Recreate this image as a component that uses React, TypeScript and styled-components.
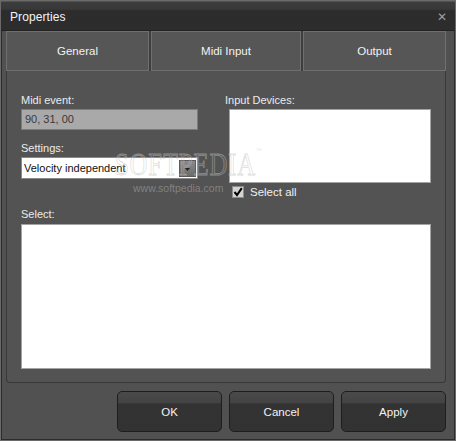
import React from "react";
import styled, { createGlobalStyle } from "styled-components";

const Global = createGlobalStyle`
  html, body { margin: 0; padding: 0; background: #515151; }
  * { box-sizing: border-box; }
`;

const Window = styled.div`
  position: relative;
  width: 456px;
  height: 441px;
  background: #515151;
  border: 1px solid #6a6a6a;
  box-shadow: inset 0 0 0 1px #2c2c2c;
  display: flex;
  flex-direction: column;
  font-family: "Liberation Sans", Arial, sans-serif;
  font-size: 11px;
  color: #ececec;
  overflow: hidden;
`;

const TitleBar = styled.div`
  height: 30px;
  flex: none;
  display: flex;
  align-items: center;
  justify-content: space-between;
  padding: 2px 7px 0 9px;
  border-top: 1px solid #50535b;
  background: linear-gradient(#3c3c3c 0, #383838 25%, #2c2c2c 32%, #2d2d2d 100%);
  border-bottom: 1px solid #222;
`;

const Title = styled.span`
  font-size: 12px;
  color: #f4f4f4;
  letter-spacing: 0.1px;
`;

const Close = styled.span`
  font-family: "DejaVu Sans", sans-serif;
  font-weight: bold;
  font-size: 12px;
  color: #9c9c9c;
  line-height: 1;
  margin-right: 1px;
`;

const Content = styled.div`
  flex: 1;
  display: flex;
  flex-direction: column;
  padding: 0 9px 0 5px;
`;

const Tabs = styled.div`
  display: grid;
  grid-template-columns: 143px 150px 143px;
  gap: 2px;
  height: 40px;
  background: #3e3e3e;
`;

const Tab = styled.div`
  display: flex;
  align-items: center;
  justify-content: center;
  background: #565656;
  border: 1px solid #6f6f6f;
  color: #f2f2f2;
  font-size: 11.5px;
`;

const Panel = styled.div`
  position: relative;
  height: 312px;
  border: 1px solid #383838;
  border-top: none;
  border-radius: 0 0 4px 4px;
  background: #535353;
  padding: 22px 14px 0 14px;
  display: flex;
  flex-direction: column;
`;

const TopGrid = styled.div`
  display: grid;
  grid-template-columns: 177px 206px;
  column-gap: 27px;
`;

const Column = styled.div`
  display: flex;
  flex-direction: column;
`;

const Label = styled.div<{ $top?: number; $left?: number }>`
  height: 14px;
  line-height: 14px;
  margin-top: ${(p) => p.$top ?? 0}px;
  margin-left: ${(p) => p.$left ?? 0}px;
  color: #ececec;
  white-space: nowrap;
`;

const ReadOnlyField = styled.div`
  margin-top: 2px;
  height: 21px;
  background: #a9a9a9;
  border: 1px solid #7c7c7c;
  color: #3a3a3a;
  padding-left: 3px;
  line-height: 19px;
`;

const Combo = styled.div`
  margin-top: 2px;
  height: 22px;
  background: #ffffff;
  border: 1px solid #8a8a8a;
  display: flex;
  align-items: center;
  justify-content: space-between;
  padding: 0 1px 0 2px;
  color: #111;
`;

const DropButton = styled.div`
  width: 17px;
  height: 17px;
  background: linear-gradient(#8a8a8a, #6c6c6c);
  border: 1px solid #5a5a5a;
  display: flex;
  align-items: flex-end;
  justify-content: center;
  padding-bottom: 5px;
`;

const ListBox = styled.div<{ $w: number; $h: number; $left?: number; $top?: number }>`
  margin-top: ${(p) => p.$top ?? 2}px;
  margin-left: ${(p) => p.$left ?? 0}px;
  width: ${(p) => p.$w}px;
  height: ${(p) => p.$h}px;
  background: #ffffff;
  border: 1px solid #a4a4a4;
`;

const CheckRow = styled.div`
  display: flex;
  align-items: center;
  gap: 6px;
  margin: 2px 0 0 7px;
  height: 13px;
`;

const CheckBox = styled.div`
  width: 12px;
  height: 12px;
  background: #d4d4d4;
  border: 1px solid #8c8c8c;
  display: flex;
  align-items: center;
  justify-content: center;
`;

const CheckLabel = styled.span`
  font-size: 11.5px;
  color: #f0f0f0;
`;

const Buttons = styled.div`
  display: flex;
  justify-content: flex-end;
  gap: 7px;
  margin-top: 8px;
`;

const Button = styled.div`
  width: 105px;
  height: 41px;
  border: 1px solid #1e1e1e;
  border-radius: 5px;
  background: linear-gradient(#4a4a4a 0, #434343 28%, #333333 30%, #323232 100%);
  display: flex;
  align-items: center;
  justify-content: center;
  color: #f4f4f4;
  font-size: 11.5px;
  padding-top: 1px;
`;

const Watermark = styled.div`
  position: absolute;
  left: 108px;
  top: 76px;
  font-family: "Liberation Serif", serif;
  font-size: 31px;
  letter-spacing: 1px;
  color: rgba(255, 255, 255, 0.08);
  -webkit-text-stroke: 0.8px rgba(190, 190, 190, 0.55);
  transform: scaleX(0.8);
  transform-origin: left top;
  pointer-events: none;
  white-space: nowrap;
`;

const Tm = styled.sup`
  font-size: 7px;
  vertical-align: top;
  -webkit-text-stroke: 0;
  color: rgba(200, 200, 200, 0.5);
`;

const WatermarkUrl = styled.div`
  position: absolute;
  left: 126px;
  top: 111px;
  font-family: "Liberation Sans", Arial, sans-serif;
  font-size: 10.5px;
  color: rgba(170, 170, 170, 0.55);
  pointer-events: none;
`;

export default function App() {
  return (
    <>
      <Global />
      <Window>
        <TitleBar>
          <Title>Properties</Title>
          <Close>✕</Close>
        </TitleBar>
        <Content>
          <Tabs>
            <Tab>General</Tab>
            <Tab>Midi Input</Tab>
            <Tab>Output</Tab>
          </Tabs>
          <Panel>
            <TopGrid>
              <Column>
                <Label>Midi event:</Label>
                <ReadOnlyField>90, 31, 00</ReadOnlyField>
                <Label $top={11}>Settings:</Label>
                <Combo>
                  <span>Velocity independent</span>
                  <DropButton>
                    <svg width="5" height="3" viewBox="0 0 5 3">
                      <path d="M0 0H5L2.5 3Z" fill="#222" />
                    </svg>
                  </DropButton>
                </Combo>
              </Column>
              <Column>
                <Label>Input Devices:</Label>
                <ListBox $w={202} $h={74} $left={4} />
                <CheckRow>
                  <CheckBox>
                    <svg width="10" height="10" viewBox="0 0 10 10">
                      <path d="M1.5 5 L4 8 L8.8 1.2" stroke="#000" strokeWidth="2" fill="none" />
                    </svg>
                  </CheckBox>
                  <CheckLabel>Select all</CheckLabel>
                </CheckRow>
              </Column>
            </TopGrid>
            <Label $top={9}>Select:</Label>
            <ListBox $w={410} $h={145} $top={3} />
            <Watermark>
              SOFTPEDIA<Tm>™</Tm>
            </Watermark>
            <WatermarkUrl>www.softpedia.com</WatermarkUrl>
          </Panel>
          <Buttons>
            <Button>OK</Button>
            <Button>Cancel</Button>
            <Button>Apply</Button>
          </Buttons>
        </Content>
      </Window>
    </>
  );
}
